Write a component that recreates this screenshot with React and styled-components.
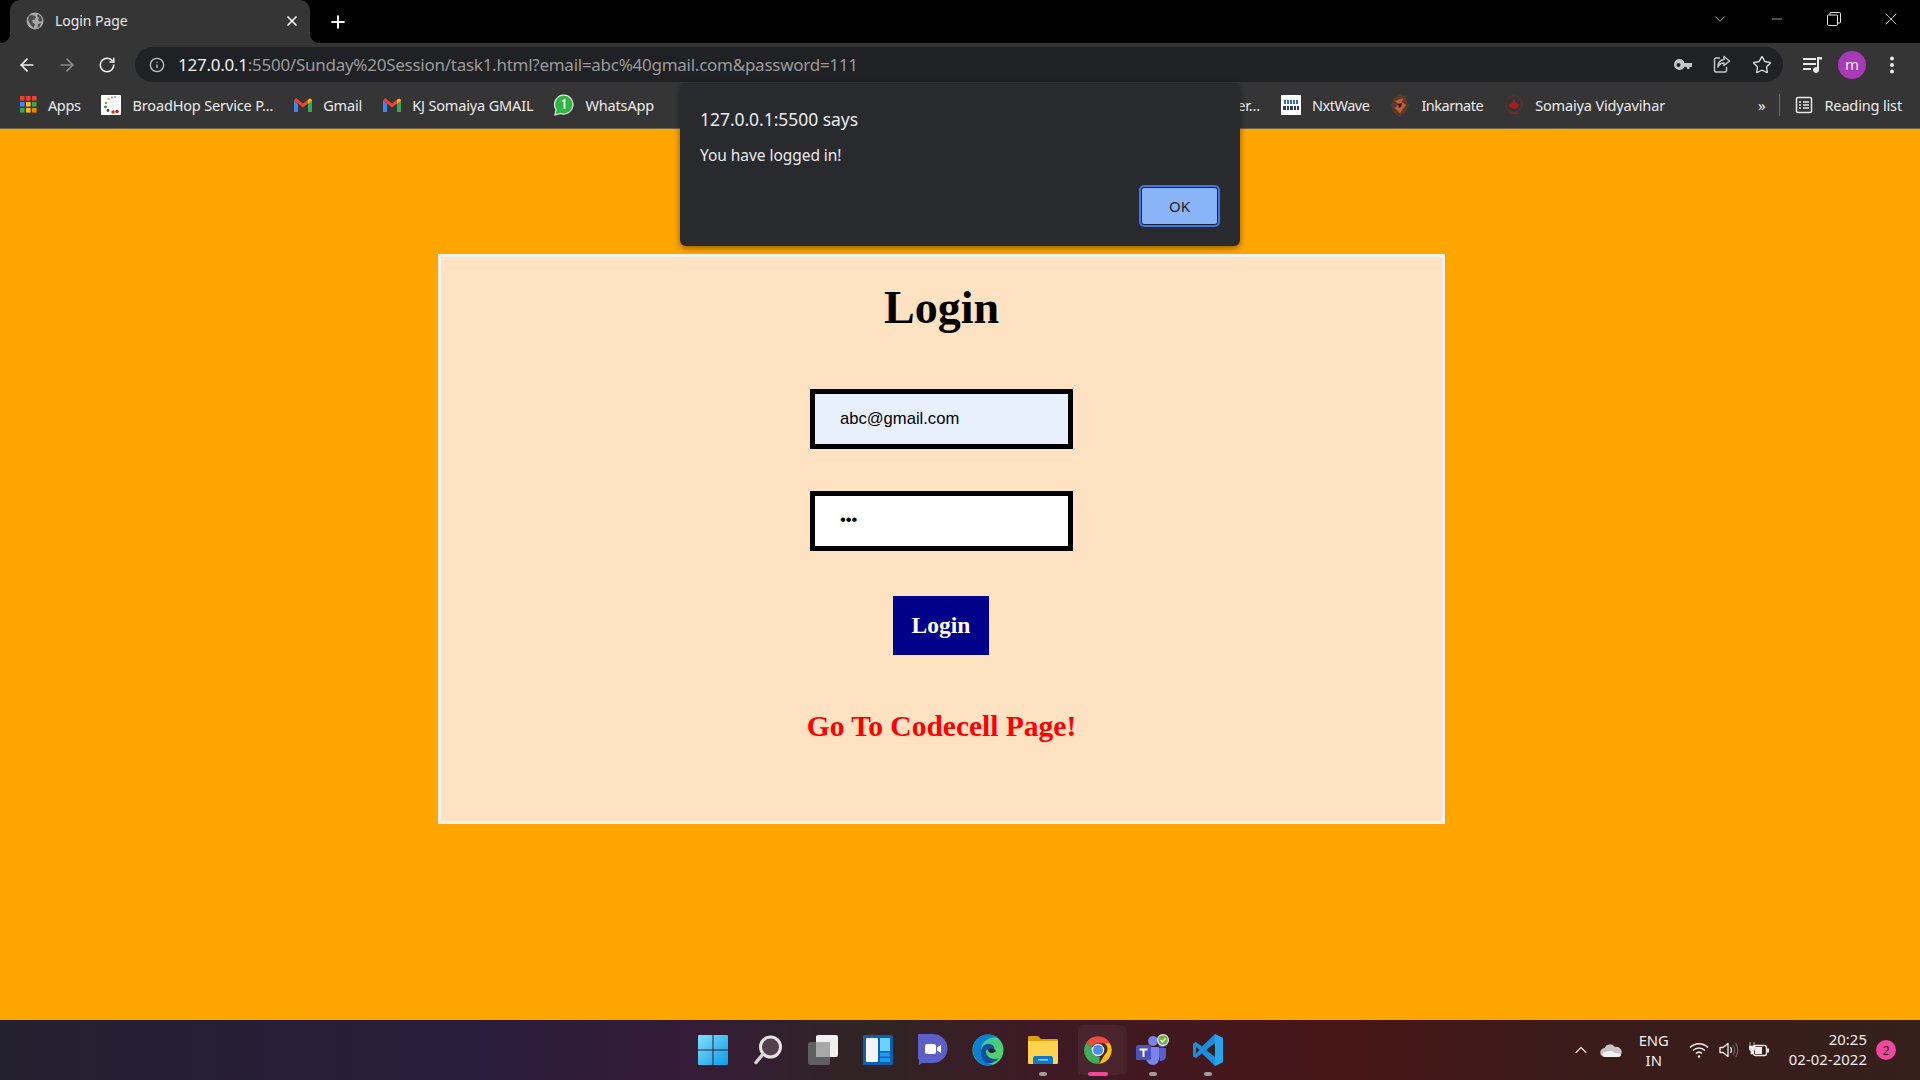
import React from "react";
import styled, { createGlobalStyle } from "styled-components";
import {
  ArrowLeft,
  ArrowRight,
  RotateCw,
  Info,
  Star,
  X,
  Plus,
  ChevronDown,
  ChevronUp,
  Minus,
} from "lucide-react";

const UI_FONT = `"Noto Sans", "Open Sans", sans-serif`;

const GlobalStyle = createGlobalStyle`
  html, body {
    margin: 0;
    padding: 0;
    height: 100%;
    overflow: hidden;
  }
  #root {
    height: 100%;
  }
`;

const Screen = styled.div`
  position: relative;
  width: 1920px;
  height: 1080px;
  display: flex;
  flex-direction: column;
  font-family: ${UI_FONT};
  overflow: hidden;
`;

/* ---- browser chrome ---- */

const TabStrip = styled.div`
  height: 43px;
  flex: none;
  background: #000;
  display: flex;
  align-items: stretch;
  padding-left: 10px;
  color: #fff;
`;

const Tab = styled.div`
  position: relative;
  width: 300px;
  background: #353535;
  border-radius: 10px 10px 0 0;
  display: flex;
  align-items: center;
  padding: 0 10px 2px 16px;
  gap: 11px;
  box-sizing: border-box;
  font-size: 14px;
  letter-spacing: -0.05px;

  &::before,
  &::after {
    content: "";
    position: absolute;
    bottom: 0;
    width: 10px;
    height: 10px;
  }
  &::before {
    left: -10px;
    background: radial-gradient(circle at 0 0, #000 10px, #353535 10.5px);
  }
  &::after {
    right: -10px;
    background: radial-gradient(circle at 100% 0, #000 10px, #353535 10.5px);
  }
`;

const TabTitle = styled.span`
  flex: 1;
  color: #e8e8e8;
`;

const NewTab = styled.div`
  display: flex;
  align-items: center;
  margin-left: 18px;
  color: #fff;
`;

const WindowControls = styled.div`
  margin-left: auto;
  display: flex;
  align-items: center;
  height: 38px;
  padding-right: 1px;
  color: #e6e6e6;
`;

const WindowButton = styled.div`
  width: 57px;
  display: flex;
  justify-content: center;
  align-items: center;
`;

const Toolbar = styled.div`
  height: 43px;
  flex: none;
  background: #353535;
  display: flex;
  align-items: center;
  padding: 0 0 0 17px;
  box-sizing: border-box;
  color: #e8e8e8;
`;

const NavButton = styled.div`
  width: 40px;
  display: flex;
  justify-content: center;
  margin-left: ${(p) => (p.$first ? -10 : 0)}px;
  color: ${(p) => (p.$dim ? "#8a8a8a" : "#f1f1f1")};
`;

const Omnibox = styled.div`
  width: 1648px;
  height: 35px;
  margin-left: 8px;
  flex: none;
  background: #202124;
  border-radius: 18px;
  display: flex;
  align-items: center;
  padding: 0 8px 0 14px;
  box-sizing: border-box;
  font-size: 17px;
  letter-spacing: -0.26px;
`;

const UrlHost = styled.span`
  color: #f1f1f1;
  margin-left: 13px;
`;

const UrlRest = styled.span`
  color: #9b9b9b;
`;

const OmniIcons = styled.div`
  margin-left: auto;
  display: flex;
  align-items: center;
  gap: 21px;
  color: #c4c4c4;
  padding-right: 3px;
`;

const ToolRight = styled.div`
  display: flex;
  align-items: center;
  margin-left: 20px;
  gap: 15px;
`;

const Avatar = styled.div`
  width: 28px;
  height: 28px;
  margin-right: 9px;
  border-radius: 50%;
  background: #a73ab5;
  color: #f3e6f6;
  display: flex;
  align-items: center;
  justify-content: center;
  font-size: 15px;
  padding-bottom: 2px;
  box-sizing: border-box;
`;

const Bookmarks = styled.div`
  height: 43px;
  flex: none;
  background: #353535;
  border-bottom: 1px solid #6b6250;
  box-sizing: border-box;
  display: flex;
  align-items: center;
  padding: 0 18px 5px 20px;
  font-size: 14.5px;
  letter-spacing: -0.15px;
  color: #ececec;
`;

const MarkGroup = styled.div`
  display: flex;
  align-items: center;
  gap: 21px;
`;

const RightMarks = styled(MarkGroup)`
  margin-left: auto;
`;

const Mark = styled.div`
  display: flex;
  align-items: center;
  gap: 11px;
  letter-spacing: ${(p) => p.$spacing || "inherit"};
`;

const MoreMarks = styled.span`
  margin-left: 72px;
  font-size: 15px;
`;

const Divider = styled.div`
  width: 1px;
  height: 22px;
  background: #6a6a6a;
  margin-left: -7px;
  margin-right: -6px;
`;

const WhiteFavicon = styled.div`
  width: 20px;
  height: 20px;
  background: #fff;
  display: flex;
  align-items: center;
  justify-content: center;
  overflow: hidden;
`;

/* ---- alert dialog ---- */

const Alert = styled.div`
  position: absolute;
  left: 680px;
  top: 83px;
  width: 560px;
  height: 163px;
  box-sizing: border-box;
  background: #292a2d;
  border-radius: 6px;
  box-shadow: 0 2px 6px rgba(0, 0, 0, 0.45);
  padding: 24px 20px 0;
  color: #e8eaed;
  display: flex;
  flex-direction: column;
  z-index: 5;
`;

const AlertTitle = styled.div`
  font-size: 17.5px;
  line-height: 24px;
  letter-spacing: -0.05px;
`;

const AlertMessage = styled.div`
  font-size: 15.5px;
  line-height: 20px;
  margin-top: 14px;
  letter-spacing: -0.05px;
`;

const AlertActions = styled.div`
  display: flex;
  justify-content: flex-end;
  margin-top: 22px;
  margin-right: 2px;
`;

const OkButton = styled.button`
  width: 77px;
  height: 38px;
  box-sizing: border-box;
  background: #8ab4f8;
  color: #202124;
  border: 1px solid #202124;
  outline: 2px solid #3b78e7;
  outline-offset: 0;
  border-radius: 3px;
  font-family: ${UI_FONT};
  font-size: 15px;
  padding: 0;
  margin: 0;
`;

/* ---- the page itself ---- */

const Page = styled.main`
  flex: 1;
  background: #ffa500;
  padding: 125px 0 0 438px;
  box-sizing: border-box;
`;

const Card = styled.form`
  width: 1007px;
  height: 570px;
  box-sizing: border-box;
  background: #ffe2c1;
  border: 3px solid #f0f0f0;
  display: flex;
  flex-direction: column;
  align-items: center;
  font-family: "Liberation Serif", serif;
`;

const Title = styled.h1`
  font-size: 46px;
  line-height: 54px;
  font-weight: 700;
  margin: 24px 0 54px;
  color: #000;
`;

const Field = styled.input`
  width: 263px;
  height: 60px;
  box-sizing: border-box;
  border: 5px solid #000;
  border-radius: 0;
  outline: none;
  padding: 0 0 ${(p) => (p.$filled ? 1 : 2)}px 25px;
  font-family: "Liberation Sans", sans-serif;
  font-size: 16.6px;
  color: #000;
  background: ${(p) => (p.$filled ? "#e8f0fe" : "#fff")};
  margin-bottom: 42px;
`;

const Submit = styled.button`
  width: 96px;
  height: 59px;
  border: none;
  background: #00008b;
  color: #fff;
  font-family: "Liberation Serif", serif;
  font-weight: 700;
  font-size: 23.5px;
  padding: 0;
  margin: 3px 1px 0 0;
`;

const CodecellLink = styled.a`
  margin-top: 54px;
  color: #f00;
  font-size: 29.5px;
  line-height: 34px;
  font-weight: 700;
  text-decoration: none;
`;

/* ---- taskbar ---- */

const Taskbar = styled.footer`
  height: 60px;
  flex: none;
  display: grid;
  grid-template-columns: 1fr auto 1fr;
  align-items: center;
  background: linear-gradient(
    90deg,
    #23202f 0%,
    #2a1c3c 25%,
    #351c38 36%,
    #2f2424 45%,
    #3e1a26 54%,
    #471616 70%,
    #3a1c1a 83%,
    #35201c 100%
  );
  color: #f1eded;
`;

const TaskIcons = styled.div`
  grid-column: 2;
  display: flex;
  width: 550px;
  height: 100%;
`;

const TaskIcon = styled.div`
  position: relative;
  width: 55px;
  height: 100%;
  display: flex;
  align-items: center;
  justify-content: center;
  box-sizing: border-box;
`;

const ActiveTile = styled.div`
  position: absolute;
  left: 8px;
  top: 5px;
  width: 44px;
  height: 50px;
  background: rgba(255, 255, 255, 0.05);
  border-radius: 5px;
  box-shadow: 6px 0 0 -1px rgba(255, 255, 255, 0.04);
`;

const RunDot = styled.div`
  position: absolute;
  bottom: 4px;
  left: 50%;
  transform: translateX(-50%);
  width: ${(p) => (p.$active ? 20 : 8)}px;
  height: 4px;
  border-radius: 2px;
  background: ${(p) => (p.$active ? "#f2479d" : "#a09a9a")};
`;

const Tray = styled.div`
  grid-column: 3;
  justify-self: end;
  display: flex;
  align-items: center;
  padding-right: 24px;
  font-size: 14.8px;
`;

const TrayIcon = styled.div`
  width: 30px;
  display: flex;
  justify-content: center;
`;

const Lang = styled.div`
  width: 42px;
  margin: 0 9px 0 7px;
  text-align: center;
  line-height: 20px;
`;

const Clock = styled.div`
  margin-left: 15px;
  margin-bottom: 2px;
  text-align: right;
  line-height: 20px;
  letter-spacing: 0.1px;
`;

const NotifyBadge = styled.div`
  width: 20px;
  height: 20px;
  border-radius: 50%;
  margin-left: 9px;
  background: #f2479d;
  color: #2a1520;
  font-size: 12.5px;
  display: flex;
  align-items: center;
  justify-content: center;
`;

/* ---- drawn icons ---- */

const GlobeFavicon = () => (
  <svg width="18" height="18" viewBox="0 0 18 18">
    <circle cx="9" cy="9" r="8.5" fill="#a8a8a8" />
    <path d="M3 3.5 7 3l3 2-1 2.5-3 .5 1 3 2 1-1.5 4L4 12 2 8zM12 2l3.5 3 .5 4-2 1-2-2 1-2-2-2zM12 12l3-1-1.5 4-2 .5z" fill="#4d4d4d" />
  </svg>
);

const AppsGrid = () => {
  const colours = ["#ea4335", "#ea4335", "#ea4335", "#4285f4", "#fbbc04", "#34a853", "#34a853", "#fbbc04", "#ea8600"];
  return (
    <svg width="17" height="17" viewBox="0 0 17 17">
      {colours.map((c, i) => (
        <rect key={i} x={(i % 3) * 6} y={Math.floor(i / 3) * 6} width="4.6" height="4.6" fill={c} />
      ))}
    </svg>
  );
};

const BroadHopIcon = () => (
  <WhiteFavicon>
    <svg width="20" height="20" viewBox="0 0 20 20">
      <circle cx="11" cy="2.5" r="1" fill="#9a6fb0" />
      <circle cx="14" cy="2" r="1" fill="#7b8fc4" />
      <circle cx="7.5" cy="4" r="1.2" fill="#c9b458" />
      <circle cx="5" cy="8" r="1.3" fill="#6aa84f" />
      <circle cx="4.5" cy="12" r="1.4" fill="#3d8b3d" />
      <circle cx="7" cy="15.5" r="1.4" fill="#444" />
      <circle cx="12" cy="17" r="1.7" fill="#d93025" />
      <circle cx="16" cy="16.5" r="1.8" fill="#c5221f" />
    </svg>
  </WhiteFavicon>
);

const GmailIcon = () => (
  <svg width="18" height="14" viewBox="0 0 18 14">
    <path d="M0 2.5V14h4V6z" fill="#4285f4" />
    <path d="M14 6v8h4V2.5z" fill="#34a853" />
    <path d="M0 2.5 9 9.5l9-7L16 0 9 5.5 2 0z" fill="#ea4335" />
    <path d="M14 2v4l4-3.5C18 .5 15.500.5 14 2z" fill="#fbbc04" />
  </svg>
);

const WhatsAppIcon = () => (
  <svg width="20" height="22" viewBox="0 0 20 22">
    <path d="M10 1a9.500 9.500 0 0 0-8 14.500L1 21l5.500-1.500A9.500 9.500 0 1 0 10 1z" fill="#2bb741" stroke="#eee" strokeWidth="1.200" />
    <path d="M8 7.500 10.500 6v9" fill="none" stroke="#fff" strokeWidth="1.800" />
  </svg>
);

const NxtWaveIcon = () => (
  <WhiteFavicon>
    <svg width="20" height="20" viewBox="0 0 20 20">
      <path d="M3 5h2v4H3zM6 5h2v4H6zM9 5h2v4H9zM12 5h2v4h-2zM15 5h2v4h-2z" fill="#2c6cb8" />
      <path d="M2 11h3v4H2zM6 11h2v4H6zM9 11h3v4H9zM13 11h2v4h-2zM16 11h2v4h-2z" fill="#2f3b55" />
    </svg>
  </WhiteFavicon>
);

const InkarnateIcon = () => (
  <svg width="20" height="26" viewBox="0 0 20 26">
    <path d="M10 1 14 4 17 3 16 8 19 13 16 20 10 25 4 21 1 13 4 6z" fill="#5a3a2c" />
    <path d="M5 9 13 6 12 10 16 13 10 21 5 16 9 12z" fill="#c4602c" />
    <path d="M8 12 12 11 11 15 9 16z" fill="#2a1a14" />
  </svg>
);

const SomaiyaIcon = () => (
  <svg width="20" height="24" viewBox="0 0 22 24">
    <circle cx="11" cy="11" r="9" fill="none" stroke="#6e2a2a" strokeWidth="1.500" strokeDasharray="2 1" />
    <path d="M11 5c1 4 4 6 6 7-1 3-3 4-6 4s-5-1-6-4c2-1 5-3 6-7z" fill="#a81c1c" />
    <path d="M5 20h12v2H5z" fill="#6e2a2a" />
  </svg>
);

const ReadingListIcon = () => (
  <svg width="18" height="18" viewBox="0 0 18 18" fill="none" stroke="#e8e8e8" strokeWidth="1.500">
    <rect x="1.500" y="1.500" width="15" height="15" rx="1.500" />
    <path d="M4 6h2M8 6h6M4 9h2M8 9h6M4 12h2M8 12h6" />
  </svg>
);

const KeyIcon = () => (
  <svg width="18" height="12" viewBox="0 0 18 12" fill="#c4c4c4">
    <path d="M5.500 0a5.500 5.500 0 1 0 5 8H13V10h2.500V8H18V4H10.500A5.500 5.500 0 0 0 5.500 0zM4.500 4a2 2 0 1 1 0 4 2 2 0 0 1 0-4z" fillRule="evenodd" />
  </svg>
);

const ShareIcon = () => (
  <svg width="18" height="19" viewBox="0 0 18 19" fill="none" stroke="#c4c4c4" strokeWidth="1.500">
    <path d="M7 3H3a1.500 1.500 0 0 0-1.500 1.500v11A1.500 1.500 0 0 0 3 17h9a1.500 1.500 0 0 0 1.500-1.500V12" />
    <path d="M11 1.500 16.500 6 11 10.500V8C8 8 6 9.500 5 12c0-4 2-7 6-7.500z" strokeLinejoin="round" />
  </svg>
);

const MediaIcon = () => (
  <svg width="20" height="18" viewBox="0 0 20 18" fill="#e8e8e8">
    <rect x="0" y="2" width="13" height="2" />
    <rect x="0" y="7" width="13" height="2" />
    <rect x="0" y="12" width="8" height="2" />
    <path d="M14 1h5v2.500h-3V14a3 3 0 1 1-2-2.800z" />
  </svg>
);

const MenuDots = () => (
  <svg width="4" height="18" viewBox="0 0 4 18" fill="#e8e8e8">
    <circle cx="2" cy="2.500" r="2" />
    <circle cx="2" cy="9" r="2" />
    <circle cx="2" cy="15.500" r="2" />
  </svg>
);

const RestoreIcon = () => (
  <svg width="14" height="14" viewBox="0 0 14 14" fill="none" stroke="#e6e6e6" strokeWidth="1">
    <rect x="0.500" y="3" width="10" height="10.500" rx="1" />
    <path d="M3 3V1.500a1 1 0 0 1 1-1h8.500a1 1 0 0 1 1 1V10a1 1 0 0 1-1 1h-2" />
  </svg>
);

const StartIcon = () => (
  <svg width="30" height="30" viewBox="0 0 30 30">
    <defs>
      <linearGradient id="win" x1="0" y1="0" x2="1" y2="1">
        <stop offset="0" stopColor="#7fe0fb" />
        <stop offset="1" stopColor="#0d9be8" />
      </linearGradient>
    </defs>
    <path d="M0 1a1 1 0 0 1 1-1h13.500v14.500H0zM15.500 0H29a1 1 0 0 1 1 1v13.500H15.500zM0 15.500h14.500V30H1a1 1 0 0 1-1-1zM15.500 15.500H30V29a1 1 0 0 1-1 1H15.500z" fill="url(#win)" />
  </svg>
);

const SearchIcon = () => (
  <svg width="28" height="30" viewBox="0 0 28 30">
    <circle cx="16.500" cy="12" r="10" fill="#53404d" stroke="#e8e4e4" strokeWidth="3" />
    <path d="M9 19 2 27.500" stroke="#d8d4d4" strokeWidth="3.500" strokeLinecap="round" />
  </svg>
);

const TaskViewIcon = () => (
  <svg width="30" height="30" viewBox="0 0 30 30">
    <rect x="0" y="7" width="22" height="23" rx="2" fill="#5f5f5f" />
    <rect x="8" y="0" width="22" height="22" rx="2" fill="#f1f1f1" />
    <rect x="8" y="7" width="14" height="15" fill="#a8a8a8" />
  </svg>
);

const WidgetsIcon = () => (
  <svg width="30" height="30" viewBox="0 0 30 30">
    <rect width="30" height="30" rx="1.500" fill="#0f5fb0" />
    <rect x="3" y="3" width="12" height="24" rx="1" fill="#f4f4f4" />
    <rect x="17" y="3" width="10" height="13" fill="#6bd0fa" />
    <rect x="17" y="17.500" width="10" height="4" fill="#1c9cf0" />
    <rect x="17" y="23" width="10" height="4" fill="#1c9cf0" />
  </svg>
);

const ChatIcon = () => (
  <svg width="30" height="32" viewBox="0 0 30 32">
    <path d="M15 0a14.500 14.500 0 0 1 0 29H5c-2 0-3 1.500-4.500 2.500.8-2 .5-4 .5-6A14.500 14.500 0 0 1 15 0z" fill="#5b5fc7" />
    <rect x="7" y="10" width="11" height="10" rx="2" fill="#fff" />
    <path d="M19 13.500 23 11v8l-4-2.500z" fill="#fff" />
  </svg>
);

const EdgeIcon = () => (
  <svg width="32" height="32" viewBox="0 0 32 32">
    <defs>
      <linearGradient id="edgeTop" x1="0" y1="0" x2="1" y2="1">
        <stop offset="0" stopColor="#2bc4b0" />
        <stop offset="1" stopColor="#5ad65a" />
      </linearGradient>
    </defs>
    <circle cx="16" cy="16" r="15.500" fill="url(#edgeTop)" />
    <path d="M1 15C2 6 8 .5 16 .5c6 0 10 3 10 3C20 2 8 6 9 18c.5 7 6 12 12 12.500-3 1-5 1.500-7 1C6 30 .5 23 1 15z" fill="#0c7fd0" />
    <path d="M9 18c0-6 5-9 9-8 4 .8 5 4 4 6h-6c-2-1-3 2-1 5 2 4 8 5 12 3-3 4-8 6-12 5-4-1-6-6-6-11z" fill="#124e9e" />
    <path d="M17 15c4-1 6 0 7 2-1 2-6 3-8 0z" fill="#33211f" />
  </svg>
);

const ExplorerIcon = () => (
  <svg width="30" height="30" viewBox="0 0 30 30">
    <path d="M0 2a1 1 0 0 1 1-1h9l3 3h16a1 1 0 0 1 1 1v4H0z" fill="#dca000" />
    <path d="M0 6h30v22a1 1 0 0 1-1 1H1a1 1 0 0 1-1-1z" fill="#ffd34f" />
    <path d="M5 29v-6a2 2 0 0 1 2-2h16a2 2 0 0 1 2 2v6z" fill="#0f78c8" />
    <rect x="10" y="24" width="10" height="1.500" fill="#9bd0f5" />
  </svg>
);

const ChromeIcon = () => (
  <svg width="30" height="30" viewBox="0 0 48 48">
    <path d="M24 2a22 22 0 0 1 19 11H24a11 11 0 0 0-10 6.500L5.500 12A22 22 0 0 1 24 2z" fill="#ea4335" />
    <path d="M43 13a22 22 0 0 1-17 33l9-15a11 11 0 0 0-1-18z" fill="#fbbc04" />
    <path d="M5.500 12 14 19.500 24 35c1 0 2 0 3-.5L26 46A22 22 0 0 1 5.500 12z" fill="#34a853" />
    <circle cx="24" cy="24" r="10" fill="#fff" />
    <circle cx="24" cy="24" r="8" fill="#4285f4" />
  </svg>
);

const TeamsIcon = () => (
  <svg width="34" height="32" viewBox="0 0 34 32">
    <circle cx="17" cy="7" r="5" fill="#7b83eb" />
    <circle cx="26" cy="10" r="3.500" fill="#5b5fc7" />
    <path d="M21 14h9v8a5 5 0 0 1-5 5h-1z" fill="#5b5fc7" />
    <path d="M9 13h14v12a6 6 0 0 1-6 6 7 7 0 0 1-7-6z" fill="#7b83eb" />
    <rect x="0" y="11" width="15" height="15" rx="1.500" fill="#4b53bc" />
    <path d="M3.500 14.500h8v2H8.500V23h-2v-6.500h-3z" fill="#fff" />
    <circle cx="27" cy="6" r="6" fill="#eee" />
    <circle cx="27" cy="6" r="4.800" fill="#6bb13c" />
    <path d="m24.500 6 2 2 3-3.500" fill="none" stroke="#fff" strokeWidth="1.400" />
  </svg>
);

const VsCodeIcon = () => (
  <svg width="30" height="32" viewBox="0 0 30 32">
    <path d="M22 0 29 3.500a1.500 1.500 0 0 1 1 1.500v22a1.500 1.500 0 0 1-1 1.500L22 32 9 19.500 3 24 0 22.500V9.500L3 8l6 4.500z" fill="#1a8fdc" />
    <path d="M22 9 13 16l9 7z" fill="#33211f" />
    <path d="M3 12.500v7L6.500 16z" fill="#33211f" />
    <path d="M22 0 29 3.500a1.500 1.500 0 0 1 1 1.500v22a1.500 1.500 0 0 1-1 1.500L22 32z" fill="#26a5ee" />
  </svg>
);

const CloudIcon = () => (
  <svg width="22" height="14" viewBox="0 0 22 14">
    <path d="M5 14a4.500 4.500 0 0 1-.5-9A6 6 0 0 1 15 4a5 5 0 0 1 3 10z" fill="#c9c4c4" />
    <path d="M5 14a2.500 2.500 0 0 1 0-5c2 0 3-1 5-1 3 0 4 1 5 2 2 0 6 0 6 2 0 1-1 2-3 2z" fill="#f4f2f2" />
  </svg>
);

const WifiIcon = () => (
  <svg width="20" height="16" viewBox="0 0 20 16" fill="none" stroke="#f1eded" strokeWidth="1.500">
    <path d="M1 5.500c5-5 13-5 18 0" />
    <path d="M4 8.500c3.500-3.500 8.500-3.500 12 0" />
    <path d="M7 11.500c1.800-1.800 4.200-1.800 6 0" />
    <circle cx="10" cy="14.500" r="1.200" fill="#f1eded" stroke="none" />
  </svg>
);

const SpeakerIcon = () => (
  <svg width="20" height="18" viewBox="0 0 20 18" fill="none" stroke="#f1eded" strokeWidth="1.300">
    <path d="M1 6.500h3L9 2.500v13l-5-4H1z" strokeLinejoin="round" />
    <path d="M11.500 6c1.300 2 1.300 4 0 6" />
    <path d="M14 4c2 3 2 7 0 10" stroke="#6b5a5a" />
    <path d="M16.500 2c3 4 3 10 0 14" stroke="#6b5a5a" />
  </svg>
);

const BatteryIcon = () => (
  <svg width="20" height="16" viewBox="0 0 20 16">
    <rect x="4.500" y="3.500" width="13" height="10" rx="2" fill="none" stroke="#f1eded" strokeWidth="1.300" />
    <rect x="6" y="5" width="7" height="7" fill="#f1eded" />
    <rect x="18" y="6.500" width="2" height="4" fill="#f1eded" />
    <path d="M1 0v4M5 0v4M0 4h6v2a3 3 0 0 1-2 3v3H2V9a3 3 0 0 1-2-3z" fill="#f1eded" stroke="#f1eded" strokeWidth="0.700" />
  </svg>
);

const RightMarkItems = [
  { icon: <NxtWaveIcon />, label: "NxtWave", spacing: "-0.5px" },
  { icon: <InkarnateIcon />, label: "Inkarnate", spacing: "-0.5px" },
  { icon: <SomaiyaIcon />, label: "Somaiya Vidyavihar" },
];

const App = () => {
  return (
    <Screen>
      <GlobalStyle />

      <TabStrip>
        <Tab>
          <GlobeFavicon />
          <TabTitle>Login Page</TabTitle>
          <X size={16} strokeWidth={2.5} />
        </Tab>
        <NewTab>
          <Plus size={20} strokeWidth={2.4} />
        </NewTab>
        <WindowControls>
          <WindowButton>
            <ChevronDown size={18} strokeWidth={1} />
          </WindowButton>
          <WindowButton>
            <Minus size={16} strokeWidth={1} />
          </WindowButton>
          <WindowButton>
            <RestoreIcon />
          </WindowButton>
          <WindowButton>
            <X size={20} strokeWidth={1} />
          </WindowButton>
        </WindowControls>
      </TabStrip>

      <Toolbar>
        <NavButton $first>
          <ArrowLeft size={20} strokeWidth={2} />
        </NavButton>
        <NavButton $dim>
          <ArrowRight size={20} strokeWidth={2} />
        </NavButton>
        <NavButton>
          <RotateCw size={18} strokeWidth={2} />
        </NavButton>
        <Omnibox>
          <Info size={16} color="#c4c4c4" strokeWidth={2} />
          <UrlHost>127.0.0.1</UrlHost>
          <UrlRest>:5500/Sunday%20Session/task1.html?email=abc%40gmail.com&amp;password=111</UrlRest>
          <OmniIcons>
            <KeyIcon />
            <ShareIcon />
            <Star size={20} strokeWidth={1.6} color="#e0e0e0" />
          </OmniIcons>
        </Omnibox>
        <ToolRight>
          <MediaIcon />
          <Avatar>m</Avatar>
          <MenuDots />
        </ToolRight>
      </Toolbar>

      <Bookmarks>
        <MarkGroup>
          <Mark $spacing="-0.4px">
            <AppsGrid />
            Apps
          </Mark>
          <Mark>
            <BroadHopIcon />
            BroadHop Service P...
          </Mark>
          <Mark>
            <GmailIcon />
            Gmail
          </Mark>
          <Mark>
            <GmailIcon />
            KJ Somaiya GMAIL
          </Mark>
          <Mark>
            <WhatsAppIcon />
            WhatsApp
          </Mark>
        </MarkGroup>
        <RightMarks>
          <span>er...</span>
          {RightMarkItems.map((m) => (
            <Mark key={m.label} $spacing={m.spacing}>
              {m.icon}
              {m.label}
            </Mark>
          ))}
          <MoreMarks>»</MoreMarks>
          <Divider />
          <Mark>
            <ReadingListIcon />
            Reading list
          </Mark>
        </RightMarks>
      </Bookmarks>

      <Alert>
        <AlertTitle>127.0.0.1:5500 says</AlertTitle>
        <AlertMessage>You have logged in!</AlertMessage>
        <AlertActions>
          <OkButton type="button">OK</OkButton>
        </AlertActions>
      </Alert>

      <Page>
        <Card onSubmit={(e) => e.preventDefault()}>
          <Title>Login</Title>
          <Field type="email" $filled defaultValue="abc@gmail.com" />
          <Field type="password" defaultValue="111" />
          <Submit type="submit">Login</Submit>
          <CodecellLink href="#">Go To Codecell Page!</CodecellLink>
        </Card>
      </Page>

      <Taskbar>
        <TaskIcons>
          <TaskIcon><StartIcon /></TaskIcon>
          <TaskIcon><SearchIcon /></TaskIcon>
          <TaskIcon><TaskViewIcon /></TaskIcon>
          <TaskIcon><WidgetsIcon /></TaskIcon>
          <TaskIcon><ChatIcon /></TaskIcon>
          <TaskIcon><EdgeIcon /></TaskIcon>
          <TaskIcon><ExplorerIcon /><RunDot /></TaskIcon>
          <TaskIcon>
            <ActiveTile />
            <ChromeIcon />
            <RunDot $active />
          </TaskIcon>
          <TaskIcon><TeamsIcon /><RunDot /></TaskIcon>
          <TaskIcon><VsCodeIcon /><RunDot /></TaskIcon>
        </TaskIcons>
        <Tray>
          <TrayIcon><ChevronUp size={20} strokeWidth={1.3} /></TrayIcon>
          <TrayIcon><CloudIcon /></TrayIcon>
          <Lang>ENG<br />IN</Lang>
          <TrayIcon><WifiIcon /></TrayIcon>
          <TrayIcon><SpeakerIcon /></TrayIcon>
          <TrayIcon><BatteryIcon /></TrayIcon>
          <Clock>20:25<br />02-02-2022</Clock>
          <NotifyBadge>2</NotifyBadge>
        </Tray>
      </Taskbar>
    </Screen>
  );
};

export default App;
